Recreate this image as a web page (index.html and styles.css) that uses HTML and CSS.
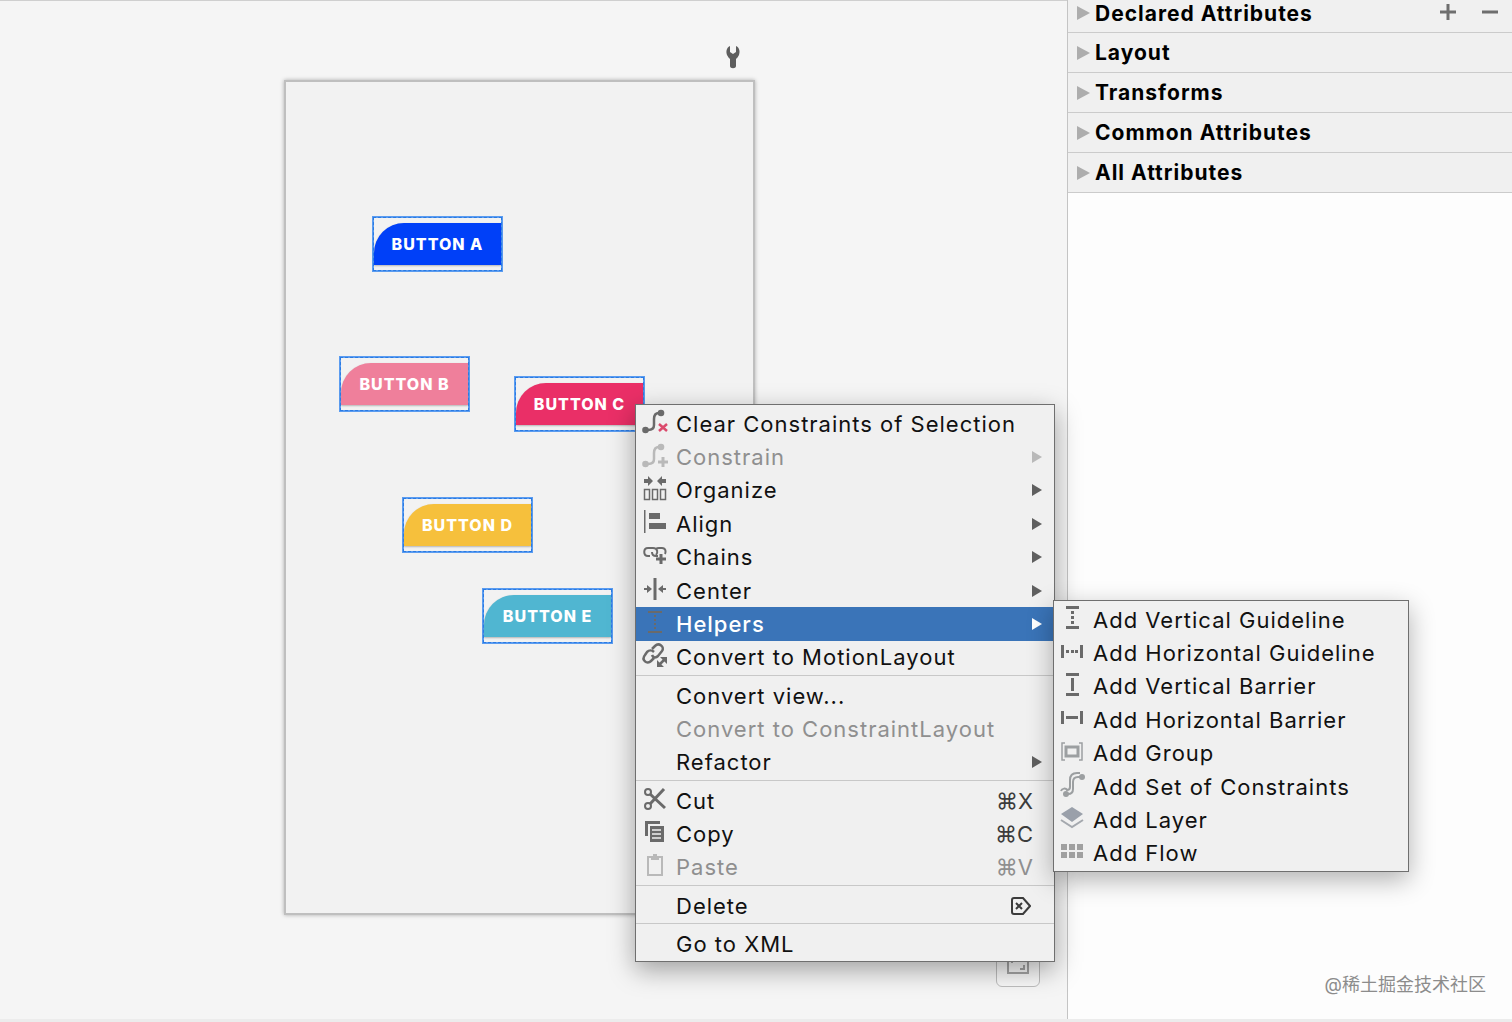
FILE: index.html
```html
<!DOCTYPE html>
<html lang="en">
<head>
    <meta charset="UTF-8">
    <meta name="viewport" content="width=device-width, initial-scale=1.0">
    <title>Layout Editor</title>
    <link rel="stylesheet" href="styles.css">
</head>
<body>
    <main class="canvas">
        <button class="wrench" aria-label="Design tools">
            <svg width="14" height="24" viewBox="0 0 14 24"><path d="M4 1C0 3 0 7 1 10c1 2 2 3 3 4v7c0 3 6 3 6 0v-7c1-1 2-2 3-4 1-3 1-7-3-9v6L7 9 4 7z" fill="#5e5e5e"/></svg>
        </button>

        <div class="artboard">
            <div class="widget widget-a"><button>BUTTON A</button></div>
            <div class="widget widget-b"><button>BUTTON B</button></div>
            <div class="widget widget-c"><button>BUTTON C</button></div>
            <div class="widget widget-d"><button>BUTTON D</button></div>
            <div class="widget widget-e"><button>BUTTON E</button></div>
        </div>

        <button class="zoom-fit" aria-label="Zoom to fit">
            <svg width="22" height="22" viewBox="0 0 22 22" fill="none" stroke="#a5a5a5" stroke-width="2"><path d="M1 1h20v18H1z"/><path d="M5 9V5h4M13 15h4v-4" /></svg>
        </button>

        <div class="menu context-menu">
            <div class="group">
                <button class="item">
                    <svg class="icon" viewBox="0 0 24 24"><path d="M3 20h2c4 0 6-2 6-5V9c0-4 2-6 5-6h2" fill="none" stroke="#6a6a6a" stroke-width="2.500"/><circle cx="2.500" cy="20" r="3.300" fill="#6a6a6a"/><circle cx="18" cy="3" r="3.300" fill="#6a6a6a"/><path d="M16 14l8 7M24 14l-8 7" stroke="#db4a6c" stroke-width="2.500"/></svg>
                    <span>Clear Constraints of Selection</span>
                </button>
                <button class="item" disabled>
                    <svg class="icon" viewBox="0 0 24 24"><path d="M3 20h2c4 0 6-2 6-5V9c0-4 2-6 5-6h2" fill="none" stroke="#b9b9b9" stroke-width="2.500"/><circle cx="2.500" cy="20" r="3.300" fill="#b9b9b9"/><circle cx="18" cy="3" r="3.300" fill="#b9b9b9"/><path d="M20 13v10M15 18h10" stroke="#b9b9b9" stroke-width="3"/></svg>
                    <span>Constrain</span>
                    <i class="arrow"></i>
                </button>
                <button class="item">
                    <svg class="icon" viewBox="0 0 24 24"><path d="M1 2h4v-3l5 5-5 5V6H1zM23 2h-4v-3l-5 5 5 5V6h4z" fill="#6a6a6a"/><path d="M1.500 12.500h5v10h-5zM9.500 12.500h5v10h-5zM17.500 12.500h5v10h-5z" fill="none" stroke="#6a6a6a" stroke-width="1.500"/></svg>
                    <span>Organize</span>
                    <i class="arrow"></i>
                </button>
                <button class="item">
                    <svg class="icon" viewBox="0 0 24 24" fill="#6a6a6a"><path d="M1 0h1.500v23H1zM6 3h11v6H6zM6 13h17v6H6z"/></svg>
                    <span>Align</span>
                    <i class="arrow"></i>
                </button>
                <button class="item">
                    <svg class="icon" viewBox="0 0 24 24" fill="none" stroke="#6a6a6a" stroke-width="2"><path d="M7 12H5C0 12 0 4 5 4h5c5 0 5 5 3 7M9 8c0 3 1 4 4 4h2M13 5c1-1 2-1 3-1h3c4 0 4 4 3 6"/><path d="M18 10v10M13 15h10" stroke-width="3"/></svg>
                    <span>Chains</span>
                    <i class="arrow"></i>
                </button>
                <button class="item">
                    <svg class="icon" viewBox="0 0 24 24" fill="#6a6a6a"><path d="M10.500 1h3v22h-3zM1 11h3V8l5 4-5 4v-3H1zM23 11h-3V8l-5 4 5 4v-3h3z"/></svg>
                    <span>Center</span>
                    <i class="arrow"></i>
                </button>
                <button class="item selected">
                    <svg class="icon" viewBox="0 0 24 24" fill="#6a6a6a"><path d="M5 1h14v2H5zM5 21h14v2H5zM11 5h2v2h-2zM11 9h2v2h-2zM11 13h2v2h-2zM11 17h2v2h-2z"/></svg>
                    <span>Helpers</span>
                    <i class="arrow"></i>
                </button>
                <button class="item">
                    <svg class="icon" viewBox="0 0 24 24" fill="none" stroke="#6a6a6a" stroke-width="2.500"><path d="M9 5l3-3c4-4 10 1 7 5l-4 5c-2 2-5 2-6-1M11 8C9 6 6 6 4 8l-2 3c-4 5 2 10 6 6l3-3"/><path d="M16 21l6-6"/><path d="M17 13h7v7zM14 16v7h7z" fill="#6a6a6a" stroke="none"/></svg>
                    <span>Convert to MotionLayout</span>
                </button>
            </div>
            <div class="group group-short">
                <button class="item"><i class="icon"></i><span>Convert view...</span></button>
                <button class="item" disabled><i class="icon"></i><span>Convert to ConstraintLayout</span></button>
                <button class="item"><i class="icon"></i><span>Refactor</span><i class="arrow"></i></button>
            </div>
            <div class="group group-short">
                <button class="item">
                    <svg class="icon" viewBox="0 0 24 24" fill="none" stroke="#6a6a6a" stroke-width="2"><circle cx="5" cy="5" r="3"/><circle cx="5" cy="19" r="3"/><path d="M7 7l15 14" stroke-width="3"/><path d="M7 17L21 2" stroke-width="3"/></svg>
                    <span>Cut</span>
                    <kbd>⌘X</kbd>
                </button>
                <button class="item">
                    <svg class="icon" viewBox="0 0 24 24"><path d="M2 1h15v3H5v12H2z" fill="#6a6a6a"/><path d="M7 6h14v16H7z" fill="#6a6a6a"/><path d="M9 10h9M9 14h9M9 18h9" stroke="#f0f0f0" stroke-width="1.500"/></svg>
                    <span>Copy</span>
                    <kbd>⌘C</kbd>
                </button>
                <button class="item" disabled>
                    <svg class="icon" viewBox="0 0 24 24" fill="none" stroke="#b9b9b9" stroke-width="2"><path d="M5 3h14v18H5z"/><path d="M8 2h2V0h4v2h2v4H8z" fill="#b9b9b9" stroke="none"/></svg>
                    <span>Paste</span>
                    <kbd>⌘V</kbd>
                </button>
            </div>
            <div class="group group-single">
                <button class="item">
                    <i class="icon"></i><span>Delete</span>
                    <svg class="key" width="20" height="18" viewBox="0 0 20 18" fill="none" stroke="#3c3c3c" stroke-width="2"><path d="M3 1h9l7 8-7 8H3c-1 0-2-1-2-2V3c0-1 1-2 2-2z"/><path d="M5 6l6 6M11 6l-6 6"/></svg>
                </button>
            </div>
            <div class="group group-single">
                <button class="item"><i class="icon"></i><span>Go to XML</span></button>
            </div>
        </div>

        <div class="menu sub-menu">
            <div class="group">
                <button class="item">
                    <svg class="icon" viewBox="0 0 24 24" fill="#6a6a6a"><path d="M6 0h13v3H6zM6 20h13v3H6zM11 5h3v3h-3zM11 10h3v3h-3zM11 15h3v3h-3z"/></svg>
                    <span>Add Vertical Guideline</span>
                </button>
                <button class="item">
                    <svg class="icon" viewBox="0 0 24 24" fill="#6a6a6a"><path d="M1 5h3v13H1zM20 5h3v13h-3zM6 10h3v3H6zM11 10h3v3h-3zM15 10h3v3h-3z"/></svg>
                    <span>Add Horizontal Guideline</span>
                </button>
                <button class="item">
                    <svg class="icon" viewBox="0 0 24 24" fill="#6a6a6a"><path d="M6 0h13v3H6zM6 20h13v3H6zM11 5h3v13h-3z"/></svg>
                    <span>Add Vertical Barrier</span>
                </button>
                <button class="item">
                    <svg class="icon" viewBox="0 0 24 24" fill="#6a6a6a"><path d="M1 5h3v13H1zM20 5h3v13h-3zM6 10h12v3H6z"/></svg>
                    <span>Add Horizontal Barrier</span>
                </button>
                <button class="item">
                    <svg class="icon" viewBox="0 0 24 24" fill="none" stroke="#9c9fa1"><path d="M5 3H2v17h3M19 3h3v17h-3" stroke-width="1.500"/><path d="M6 7h12v9H6z" stroke-width="3"/></svg>
                    <span>Add Group</span>
                </button>
                <button class="item">
                    <svg class="icon" viewBox="0 0 24 24" fill="none" stroke="#9c9fa1" stroke-width="2"><path d="M6 21h2c4 0 5-2 5-5V9c0-4 2-5 5-5h4M1 18c1-3 5-3 6-1 2 0 3-1 3-3V7c0-5 3-7 7-7h3"/><circle cx="6" cy="21" r="3" fill="#9c9fa1" stroke="none"/><circle cx="22" cy="4" r="3" fill="#9c9fa1" stroke="none"/></svg>
                    <span>Add Set of Constraints</span>
                </button>
                <button class="item">
                    <svg class="icon" viewBox="0 0 24 24"><path d="M12 1l11 7-11 8L1 8z" fill="#9aa0aa"/><path d="M1 14l11 7 11-7" fill="none" stroke="#a4a8ae" stroke-width="2"/></svg>
                    <span>Add Layer</span>
                </button>
                <button class="item">
                    <svg class="icon" viewBox="0 0 24 24" fill="#a0a0a0"><path d="M1 4h6v6H1zM9 4h6v6H9zM17 4h6v6h-6zM1 12h6v6H1zM9 12h6v6H9zM17 12h6v6h-6z"/></svg>
                    <span>Add Flow</span>
                </button>
            </div>
        </div>
    </main>

    <aside class="attributes">
        <div class="section section-first">
            <button class="section-title"><i class="arrow"></i>Declared Attributes</button>
            <button class="tool" aria-label="Add attribute"><svg width="16" height="16" viewBox="0 0 16 16"><path d="M8 0v16M0 8h16" stroke="#6e6e6e" stroke-width="3"/></svg></button>
            <button class="tool" aria-label="Remove attribute"><svg width="16" height="16" viewBox="0 0 16 16"><path d="M0 8h16" stroke="#6e6e6e" stroke-width="3"/></svg></button>
        </div>
        <div class="section"><button class="section-title"><i class="arrow"></i>Layout</button></div>
        <div class="section"><button class="section-title"><i class="arrow"></i>Transforms</button></div>
        <div class="section"><button class="section-title"><i class="arrow"></i>Common Attributes</button></div>
        <div class="section"><button class="section-title"><i class="arrow"></i>All Attributes</button></div>
        <p class="watermark">@稀土掘金技术社区</p>
    </aside>
</body>
</html>
```

FILE: styles.css
```css
* {
    box-sizing: border-box;
}
body {
    margin: 0;
    min-height: 100vh;
    display: flex;
    font-family: Inter, "Noto Sans CJK SC", sans-serif;
    color: #111;
    background: #fdfdfd;
    border-bottom: 3px solid #ececec;
}
button {
    padding: 0;
    border: none;
    background: none;
    font: inherit;
    color: inherit;
    letter-spacing: inherit;
    text-align: left;
}

/* design surface */
.canvas {
    position: relative;
    flex: 1;
    background: #f5f5f5;
    border-top: 1px solid #cfcfcf;
    padding: 79px 0 0 284px;
}
.wrench {
    position: absolute;
    left: 726px;
    top: 44px;
}
.wrench svg, .zoom-fit svg, .tool svg {
    display: block;
}
.artboard {
    position: relative;
    width: 471px;
    height: 835px;
    background: #f2f2f2;
    border: 2px solid #bfbfbf;
    box-shadow: 0 0 4px rgba(0, 0, 0, 0.3);
}
.widget {
    position: absolute;
    width: 131px;
    height: 56px;
    padding: 5px 0;
    border: 2px solid #5b9cf0;
    outline: 1px dashed #2a7be4;
    outline-offset: -2px;
}
.widget button {
    display: block;
    width: 100%;
    height: 42px;
    border-radius: 30px 0 0 0;
    background: #0040f8;
    box-shadow: 0 1px 2px rgba(0, 0, 0, 0.25);
    color: #fff;
    font-size: 16px;
    font-weight: 800;
    letter-spacing: 1px;
    text-align: center;
}
.widget-a { left: 86px; top: 134px; }
.widget-b { left: 53px; top: 274px; }
.widget-c { left: 228px; top: 294px; }
.widget-d { left: 116px; top: 415px; }
.widget-e { left: 196px; top: 506px; }
.widget-b button { background: #ef7f9b; }
.widget-c button { background: #ea2f67; }
.widget-d button { background: #f6c03c; }
.widget-e button { background: #50b6d1; }
.zoom-fit {
    position: absolute;
    right: 27px;
    bottom: 32px;
    width: 44px;
    height: 44px;
    padding: 9px 10px;
    border: 1px solid #bdbdbd;
    border-radius: 6px;
    background: #f8f8f8;
}

/* menus */
.menu {
    position: absolute;
    background: #f0f0f0;
    border: 1px solid #6f6f6f;
    font-size: 22px;
    letter-spacing: 1px;
}
.context-menu {
    left: 635px;
    top: 403px;
    width: 420px;
    padding: 2px 0 1px;
    box-shadow: 0 8px 24px rgba(0, 0, 0, 0.35);
}
.sub-menu {
    left: 1053px;
    top: 599px;
    width: 356px;
    padding: 2px 0 1px;
    box-shadow: 0 8px 24px rgba(0, 0, 0, 0.3);
    z-index: 1;
}
.group {
    display: grid;
    min-height: 267px;
}
.group-short {
    min-height: 100px;
}
.group-single {
    min-height: 33px;
}
.group + .group {
    margin-top: 1px;
    padding-top: 3px;
    border-top: 1px solid #c8c8c8;
    box-sizing: content-box;
}
.item {
    display: flex;
    align-items: center;
    gap: 9px;
    padding: 0 12px 0 7px;
    line-height: 32px;
    white-space: nowrap;
}
.sub-menu .item {
    padding-left: 6px;
}
.item:disabled {
    color: #8f8f8f;
}
.item.selected {
    background: #3a74b8;
    color: #fff;
    font-weight: 500;
}
.icon {
    width: 24px;
    height: 24px;
    flex: none;
    margin-bottom: 3px;
    overflow: visible;
}
.arrow {
    margin-left: auto;
    border: 6px solid transparent;
    border-left: 10px solid #5f5f5f;
    border-right: 0;
}
.item:disabled .arrow {
    border-left-color: #b9b9b9;
}
.selected .arrow {
    border-left-color: #fff;
}
kbd {
    margin-left: auto;
    padding-right: 9px;
    font: inherit;
    letter-spacing: 0;
    color: #3c3c3c;
}
.item:disabled kbd {
    color: #8f8f8f;
}
.key {
    margin-left: auto;
    margin-right: 11px;
}

/* attributes panel */
.attributes {
    width: 445px;
    border-left: 1px solid #c4c4c4;
    display: flex;
    flex-direction: column;
}
.section {
    display: flex;
    align-items: center;
    gap: 26px;
    height: 40px;
    padding-left: 9px;
    background: #f0f0f0;
    border-bottom: 1px solid #cbcbcb;
}
.section-first {
    height: 33px;
    padding-bottom: 6px;
}
.section-title {
    flex: 1;
    display: flex;
    align-items: center;
    gap: 5px;
    font-size: 21px;
    font-weight: 700;
    letter-spacing: 1px;
    color: #000;
}
.section .arrow {
    margin-left: 0;
    border-width: 7px 0 7px 13px;
    border-left-color: #adadad;
}
.tool {
    margin-bottom: 3px;
}
.tool:last-child {
    margin-right: 14px;
}
.watermark {
    margin: auto 26px 22px auto;
    font-size: 18px;
    line-height: 24px;
    color: #8c8c8c;
}
```
